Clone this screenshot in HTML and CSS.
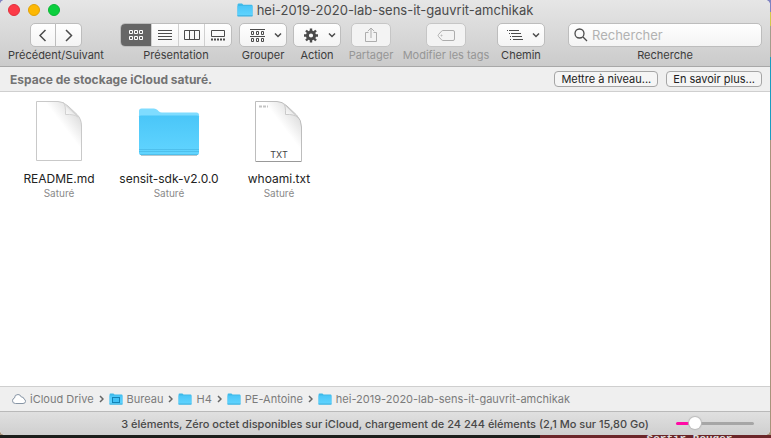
FILE: index.html
```html
<!DOCTYPE html>
<html lang="fr">
<head>
<meta charset="utf-8">
<title>hei-2019-2020-lab-sens-it-gauvrit-amchikak</title>
<link rel="stylesheet" href="styles.css">
</head>
<body>
<svg class="defs" aria-hidden="true">
  <defs>
    <linearGradient id="front" x1="0" y1="0" x2="0" y2="1"><stop offset="0" stop-color="#4ac6f8"/><stop offset="1" stop-color="#62d5ff"/></linearGradient>
    <linearGradient id="curl" x1="0" y1="1" x2="1" y2="0"><stop offset="0.1" stop-color="#fff"/><stop offset="0.6" stop-color="#e4e4e4"/></linearGradient>
    <linearGradient id="shade" x1="0.2" y1="0.8" x2="0.85" y2="0.15"><stop offset="0.6" stop-color="#fff"/><stop offset="1" stop-color="#dedede"/></linearGradient>
    <symbol id="folder" viewBox="0 0 16 14">
      <path d="M0.5 2Q0.5 0.5 1.5 0.5H5L6.3 1.7H14.6Q15.5 1.7 15.5 2.6V13H0.5Z" fill="#3fb9e8"/>
      <path d="M0.5 3H15.5V12.6Q15.5 13.3 14.8 13.3H1.2Q0.5 13.3 0.5 12.6Z" fill="url(#front)"/>
      <path d="M0.5 12.9H15.5" stroke="#38a9d8"/>
    </symbol>
  </defs>
</svg>
<div class="window">
  <header class="head">
    <div class="titlebar">
      <div class="lights">
        <button class="light close" aria-label="Fermer"></button>
        <button class="light minimize" aria-label="Réduire"></button>
        <button class="light expand" aria-label="Agrandir"></button>
      </div>
      <h1 class="title"><svg class="title-icon" aria-hidden="true"><use href="#folder"/></svg>hei-2019-2020-lab-sens-it-gauvrit-amchikak</h1>
    </div>
    <div class="toolbar">
      <div class="tool tool-nav">
        <div class="group">
          <button class="btn half" aria-label="Précédent"><svg width="26" height="22"><path d="M15.500 6L10 11.500L15.500 17"/></svg></button>
          <button class="btn half" aria-label="Suivant"><svg width="26" height="22"><path d="M10 6L15.500 11.500L10 17"/></svg></button>
        </div>
        <span class="label">Précédent/Suivant</span>
      </div>
      <div class="tool tool-view">
        <div class="group segmented">
          <button class="seg active" aria-label="Icônes"><svg width="16" height="12"><path d="M1.500 1.500h3v3h-3zM6.500 1.500h3v3h-3zM11.500 1.500h3v3h-3zM1.500 7.500h3v3h-3zM6.500 7.500h3v3h-3zM11.500 7.500h3v3h-3z"/></svg></button>
          <button class="seg" aria-label="Liste"><svg width="16" height="12"><path d="M1 1.500h14M1 4.500h14M1 7.500h14M1 10.500h14"/></svg></button>
          <button class="seg" aria-label="Colonnes"><svg width="16" height="12"><path d="M0.500 1.500h15v9h-15zM5.500 1.500v9M10.500 1.500v9"/></svg></button>
          <button class="seg" aria-label="Galerie"><svg width="16" height="12"><path d="M1.500 1.500h13v6h-13z"/><path d="M1 10.500h14" stroke-dasharray="2 1" stroke-width="2"/></svg></button>
        </div>
        <span class="label">Présentation</span>
      </div>
      <div class="tool tool-menu">
        <button class="btn" aria-label="Grouper"><svg width="46" height="22"><path d="M10 5.500h15M10 12.500h15M11.500 7.500h2v3h-2zM16.500 7.500h2v3h-2zM21.500 7.500h2v3h-2zM11.500 14.500h2v3h-2zM16.500 14.500h2v3h-2zM21.500 14.500h2v3h-2z"/><path class="chev" d="M35 9.500L38 12.500L41 9.500"/></svg></button>
        <span class="label">Grouper</span>
      </div>
      <div class="tool tool-menu">
        <button class="btn" aria-label="Action"><svg width="46" height="22"><circle cx="17" cy="11.500" r="3.600" stroke-width="3"/><path d="M17 4.500v3M17 15.500v3M10 11.500h3M21 11.500h3M12 6.500l2 2M20 14.500l2 2M22 6.500l-2 2M14 14.500l-2 2" stroke-width="2.400"/><path class="chev" d="M35 9.500L38 12.500L41 9.500"/></svg></button>
        <span class="label">Action</span>
      </div>
      <div class="tool tool-menu">
        <button class="btn single" aria-label="Partager" disabled><svg width="38" height="22"><path d="M16.500 8.500h-3v9h11v-9h-3M19 14V4.500M15.800 7.200L19 4l3.200 3.200"/></svg></button>
        <span class="label">Partager</span>
      </div>
      <div class="tool tool-tags">
        <button class="btn single" aria-label="Modifier les tags" disabled><svg width="38" height="22"><path d="M16 6.500H26Q27.500 6.500 27.500 8V15Q27.500 16.500 26 16.500H16Q15.300 16.500 14.500 15.800L11.500 12.500Q10.700 11.500 11.500 10.500L14.500 7.200Q15.300 6.500 16 6.500Z"/><circle cx="14.500" cy="11.500" r="0.500"/></svg></button>
        <span class="label">Modifier les tags</span>
      </div>
      <div class="tool tool-menu">
        <button class="btn" aria-label="Chemin"><svg width="46" height="22"><path d="M9 6.500h1M11 6.500h10M11 9.500h1M13 9.500h10M12 12.500h1M14 12.500h10M12 15.500h1M15 15.500h10"/><path class="chev" d="M35 9.500L38 12.500L41 9.500"/></svg></button>
        <span class="label">Chemin</span>
      </div>
      <div class="tool tool-search">
        <div class="search">
          <svg width="14" height="14" aria-hidden="true"><circle cx="5.500" cy="5.500" r="4.500"/><path d="M9 9L13 13"/></svg>
          <input id="search" type="search" placeholder="Rechercher">
        </div>
        <label class="label" for="search">Recherche</label>
      </div>
    </div>
  </header>
  <section class="banner">
    <strong class="banner-text">Espace de stockage iCloud saturé.</strong>
    <button class="small-btn">Mettre à niveau...</button>
    <button class="small-btn">En savoir plus...</button>
  </section>
  <main class="files">
    <figure class="file">
      <svg class="file-icon" viewBox="0 0 64 64" aria-hidden="true">
        <path d="M9.500 2.500H31Q36 2.500 41 7L50 15.500Q54.500 20 54.500 27V61.500H9.500Z" fill="url(#shade)" stroke="#c9c9c9"/>
        <path d="M36 3.500Q39 6 38.500 15.500Q47 15 51 18Z" fill="url(#curl)" stroke="#d2d2d2"/>
      </svg>
      <figcaption><span class="name">README.md</span><span class="state">Saturé</span></figcaption>
    </figure>
    <figure class="file">
      <svg class="file-icon" viewBox="0 0 64 64" aria-hidden="true">
        <path d="M2 12Q2 9.500 4.500 9.500H17Q19 9.500 20.500 11L22 12.500Q23 13.500 25 13.500H59.500Q62 13.500 62 16V54H2Z" fill="#7fdcff"/>
        <path d="M2 17.500Q2 16.500 4 16.500H60Q62 16.500 62 17.500V54Q62 56 60 56H4Q2 56 2 54Z" fill="url(#front)"/>
        <path d="M2 50.500H62M2 52.500H62M3 55.500H61" stroke="#43b2df" opacity="0.600"/>
        <path d="M4 56.500H60" stroke="#b8c8ce"/>
      </svg>
      <figcaption><span class="name">sensit-sdk-v2.0.0</span><span class="state">Saturé</span></figcaption>
    </figure>
    <figure class="file">
      <svg class="file-icon" viewBox="0 0 64 64" aria-hidden="true">
        <path d="M8.500 2.500H30Q35 2.500 40 7L49.500 16Q54.500 21 54.500 28V62.500H8.500Z" fill="url(#shade)" stroke="#bdbdbd"/>
        <path d="M36 4Q39 6 38.500 15.500Q47 15 51 18.500Z" fill="url(#curl)" stroke="#cacaca"/>
        <path d="M12 7.500H21" stroke="#c4c4c4" stroke-width="2" stroke-dasharray="3 1"/>
        <path d="M9 62.500H54" stroke="#999"/>
        <text class="kind" x="32" y="59">TXT</text>
      </svg>
      <figcaption><span class="name">whoami.txt</span><span class="state">Saturé</span></figcaption>
    </figure>
  </main>
  <nav class="path" aria-label="Chemin">
    <a href="#"><svg class="crumb-icon" viewBox="0 0 14 12" aria-hidden="true"><path d="M3.500 10.500Q0.500 10.500 0.500 7.800Q0.500 5.500 2.500 5Q2.500 1.500 6 1.500Q8.500 1.500 9.300 4Q11.800 3.800 12 6Q13.500 6.500 13.500 8.300Q13.500 10.500 11 10.500Z" fill="#fff" stroke="#8795a5"/></svg>iCloud Drive</a>
    <svg class="sep" aria-hidden="true"><path d="M1 1L4 4L1 7"/></svg>
    <a href="#"><svg class="crumb-icon" aria-hidden="true"><use href="#folder"/><rect x="3.500" y="4.500" width="7" height="5" fill="#3fc0f5" stroke="#1482b5"/></svg>Bureau</a>
    <svg class="sep" aria-hidden="true"><path d="M1 1L4 4L1 7"/></svg>
    <a href="#"><svg class="crumb-icon" aria-hidden="true"><use href="#folder"/></svg>H4</a>
    <svg class="sep" aria-hidden="true"><path d="M1 1L4 4L1 7"/></svg>
    <a href="#"><svg class="crumb-icon" aria-hidden="true"><use href="#folder"/></svg>PE-Antoine</a>
    <svg class="sep" aria-hidden="true"><path d="M1 1L4 4L1 7"/></svg>
    <a href="#"><svg class="crumb-icon" aria-hidden="true"><use href="#folder"/></svg>hei-2019-2020-lab-sens-it-gauvrit-amchikak</a>
  </nav>
  <footer class="status">
    <span class="status-text">3 éléments, Zéro octet disponibles sur iCloud, chargement de 24 244 éléments (2,1 Mo sur 15,80 Go)</span>
    <input class="zoom" type="range" min="0" max="100" value="20" aria-label="Taille des icônes">
  </footer>
</div>
<div class="behind"><div class="behind-card">Sortir-Bouger-</div></div>
</body>
</html>
```
FILE: styles.css
```css
* { box-sizing: border-box; }

body {
  margin: 0;
  height: 100vh;
  display: flex;
  flex-direction: column;
  overflow: hidden;
  padding-right: 1px;
  background: linear-gradient(#7f83c0 0 12px, #d2c84a 12px 26px, #a39c8c 26px 57px, #1a9cc0 57px 140px, #a8937c 140px);
  font-family: Inter, "Liberation Sans", sans-serif;
  font-size: 11px;
  color: #3c3c3c;
}

button, input { font: inherit; color: inherit; margin: 0; padding: 0; }
svg { display: block; fill: none; stroke: none; flex: none; }
.defs { position: absolute; width: 0; height: 0; }

.window {
  flex: 1;
  min-height: 0;
  display: flex;
  flex-direction: column;
  overflow: hidden;
  border-radius: 5px;
  background: #fff;
}

.head {
  background: linear-gradient(#e6e6e6, #cbcbcb);
  border-bottom: 1px solid #a8a8a8;
}

.titlebar {
  height: 23px;
  display: grid;
  grid-template-columns: 60px 1fr 60px;
  align-items: center;
  padding: 0 8px;
}
.lights { display: flex; gap: 8px; padding-bottom: 3px; }
.light { width: 12px; height: 12px; border-radius: 50%; border: 1px solid; }
.close { background: #fc3b47; border-color: #e0303c; }
.minimize { background: #fdb803; border-color: #e0a106; }
.expand { background: #0bcf3d; border-color: #0bb636; }
.title {
  margin: 0;
  padding-bottom: 3px;
  display: flex;
  justify-content: center;
  align-items: center;
  gap: 4px;
  font-size: 13px;
  line-height: 16px;
  font-weight: 400;
  color: #4b4b4b;
}
.title-icon { width: 16px; height: 14px; }

.toolbar {
  display: flex;
  gap: 8px;
  padding: 0 8px 4px;
}
.tool {
  flex: none;
  display: flex;
  flex-direction: column;
  align-items: center;
  gap: 1px;
}
.tool-nav { width: 96px; margin-right: 8px; }
.tool-view { width: 112px; }
.tool-menu { width: 46px; }
.tool-tags { width: 88px; }
.tool-search { flex: 1; min-width: 0; margin-left: 16px; }
.label { font-size: 11px; line-height: 14px; white-space: nowrap; }
.tool:has(:disabled) .label { color: #969696; }

.group { display: flex; }
.btn, .segmented, .search {
  height: 24px;
  border: 1px solid #bdbdbd;
  border-radius: 5px;
  background: linear-gradient(#fff, #f4f4f4);
}
.btn svg, .seg svg, .search svg { stroke: #4b4b4b; }
.btn svg { overflow: hidden; margin: 0 auto; }
.tool-menu .btn { width: 48px; }
.tool-menu .btn.single, .tool-tags .btn { width: 40px; }
.half { width: 26px; display: flex; justify-content: center; }
.half svg { margin: 0; stroke-width: 1.5; }
.half:first-child { border-radius: 5px 0 0 5px; }
.half:last-child { border-radius: 0 5px 5px 0; border-left-width: 0; }
.chev { stroke-width: 1.5; }
.btn:disabled { background: #f3f3f3; border-color: #c6c6c6; }
.btn:disabled svg { stroke: #adadad; }

.segmented { width: 100%; overflow: hidden; }
.seg {
  flex: 1;
  border: 0;
  border-left: 1px solid #d0d0d0;
  background: none;
  display: flex;
  align-items: center;
  justify-content: center;
}
.seg:first-child { border-left: 0; }
.seg.active { background: #666; flex: none; width: 30px; }
.seg.active svg { stroke: #fff; }

.search {
  width: 100%;
  display: flex;
  align-items: center;
  gap: 4px;
  padding: 0 5px;
}
.search svg { stroke-width: 1.3; }
.search input {
  flex: 1;
  min-width: 0;
  border: 0;
  outline: 0;
  background: none;
  font-size: 13px;
  appearance: none;
}
.search input::placeholder { color: #b2b2b2; }

.banner {
  height: 25px;
  display: flex;
  align-items: center;
  gap: 8px;
  padding: 0 8px 0 10px;
  background: #efefef;
  border-bottom: 1px solid #cfcfcf;
}
.banner-text { flex: 1; font-size: 12px; font-weight: 700; color: #737373; }
.small-btn {
  height: 16px;
  padding: 0 6px;
  border: 1px solid #a5a5a5;
  border-radius: 4px;
  background: #f5f5f5;
  font-size: 11px;
  line-height: 14px;
  color: #222;
}

.files {
  flex: 1;
  min-height: 0;
  display: flex;
  align-items: flex-start;
  flex-wrap: wrap;
  padding: 7px 4px;
}
.file { width: 110px; margin: 0; display: flex; flex-direction: column; align-items: center; }
.file-icon { width: 64px; height: 64px; }
.file figcaption { display: flex; flex-direction: column; align-items: center; padding-top: 8px; }
.name { font-size: 12px; line-height: 16px; color: #222; }
.state { font-size: 10px; line-height: 12px; color: #8a8a8a; }
.kind { font-size: 9px; fill: #444; text-anchor: middle; }

.path {
  height: 25px;
  display: flex;
  align-items: center;
  gap: 5px;
  padding: 0 12px;
  border-top: 1px solid #cfcfcf;
  background: #efefef;
}
.path a { display: flex; align-items: center; gap: 4px; color: #7b7b7b; text-decoration: none; white-space: nowrap; }
.crumb-icon { width: 14px; height: 12px; }
.sep { width: 5px; height: 8px; stroke: #666; stroke-width: 1.5; }

.status {
  height: 24px;
  display: flex;
  align-items: center;
  border-top: 1px solid #b9b9b9;
  padding: 0 16px;
  background: linear-gradient(#e0e0e0, #cfcfcf);
}
.status-text { flex: 1; text-align: center; padding-left: 78px; white-space: nowrap; font-weight: 500; color: #484848; }
.zoom { width: 78px; height: 14px; appearance: none; background: none; }
.zoom::-webkit-slider-runnable-track {
  height: 3px;
  border-radius: 2px;
  background: linear-gradient(90deg, #ff0aa5 20%, #a6a6a6 20%);
}
.zoom::-webkit-slider-thumb {
  appearance: none;
  width: 12px;
  height: 12px;
  margin-top: -5px;
  border-radius: 50%;
  background: #fff;
  box-shadow: 0 0 1px 1px #bbb;
}

.behind { height: 3px; overflow: hidden; background: #1b1e1b; display: flex; justify-content: flex-end; margin-right: -1px; }
.behind-card {
  width: 30%;
  padding-right: 32px;
  text-align: right;
  background: #6b2629;
  color: #ddd;
  font-family: "Liberation Mono", monospace;
  font-size: 11px;
  font-weight: 700;
  line-height: 8px;
}
```
